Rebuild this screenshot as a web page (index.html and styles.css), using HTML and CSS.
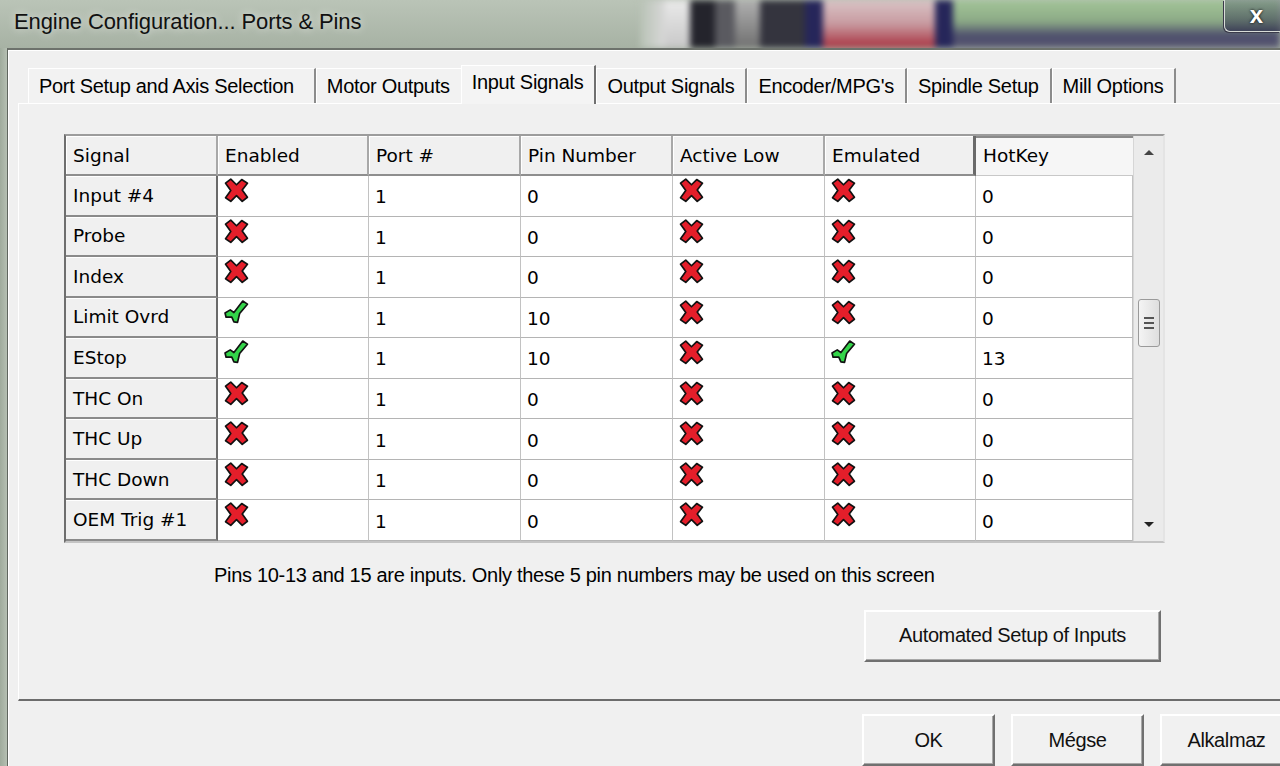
FILE: index.html
```html
<!DOCTYPE html>
<html lang="en">
<head>
    <meta charset="UTF-8">
    <title>Engine Configuration... Ports &amp; Pins</title>
    <link rel="stylesheet" href="styles.css">
</head>
<body>
    <svg class="defs" width="0" height="0">
        <symbol id="no" viewBox="0 0 24 24">
            <path d="M1.5 5 L6.5 1 L12 6.5 L17 1.5 L22.5 5 L17.5 11.5 L22.5 18.5 L17.5 22.5 L12 17 L6.5 22.5 L1.5 19 L6.5 12 Z" fill="#e41e2a" stroke="#111" stroke-width="1.6" stroke-linejoin="round"/>
        </symbol>
        <symbol id="yes" viewBox="0 0 24 24">
            <path d="M1 12.5 L6 9.5 L9.5 12 L18 1 L22.5 4 L15 13 L13 21.5 L9.5 21 L7.5 16.5 L2 16.5 Z" fill="#33d449" stroke="#111" stroke-width="1.6" stroke-linejoin="round"/>
        </symbol>
    </svg>

    <div class="titlebar">
        <div class="title">Engine Configuration... Ports &amp; Pins</div>
        <div class="backdrop">
            <div class="bd bd-fade"></div>
            <div class="bd bd-light"></div>
            <div class="bd bd-dark"></div>
            <div class="bd bd-mid"></div>
            <div class="bd bd-gray"></div>
            <div class="bd bd-dark2"></div>
            <div class="bd bd-navy"></div>
            <div class="bd bd-red"></div>
            <div class="bd bd-navy"></div>
            <div class="bd bd-green"></div>
        </div>
        <div class="close">x</div>
    </div>

    <div class="frame">
        <div class="frame-edge"></div>
        <div class="client">
            <div class="tabs">
                <div class="tab tab-first">Port Setup and Axis Selection</div>
                <div class="tab tab-before-active">Motor Outputs</div>
                <div class="tab active">Input Signals</div>
                <div class="tab">Output Signals</div>
                <div class="tab">Encoder/MPG's</div>
                <div class="tab">Spindle Setup</div>
                <div class="tab">Mill Options</div>
            </div>

            <div class="panel">
                <div class="grid-box">
                    <div class="grid">
                        <div class="head">Signal</div>
                        <div class="head">Enabled</div>
                        <div class="head">Port #</div>
                        <div class="head">Pin Number</div>
                        <div class="head">Active Low</div>
                        <div class="head raised">Emulated</div>
                        <div class="head sunken">HotKey</div>

                        <div class="rowhead">Input #4</div>
                        <div class="cell ic"><svg class="icon"><use href="#no"/></svg></div>
                        <div class="cell">1</div>
                        <div class="cell">0</div>
                        <div class="cell ic"><svg class="icon"><use href="#no"/></svg></div>
                        <div class="cell ic"><svg class="icon"><use href="#no"/></svg></div>
                        <div class="cell">0</div>

                        <div class="rowhead">Probe</div>
                        <div class="cell ic"><svg class="icon"><use href="#no"/></svg></div>
                        <div class="cell">1</div>
                        <div class="cell">0</div>
                        <div class="cell ic"><svg class="icon"><use href="#no"/></svg></div>
                        <div class="cell ic"><svg class="icon"><use href="#no"/></svg></div>
                        <div class="cell">0</div>

                        <div class="rowhead">Index</div>
                        <div class="cell ic"><svg class="icon"><use href="#no"/></svg></div>
                        <div class="cell">1</div>
                        <div class="cell">0</div>
                        <div class="cell ic"><svg class="icon"><use href="#no"/></svg></div>
                        <div class="cell ic"><svg class="icon"><use href="#no"/></svg></div>
                        <div class="cell">0</div>

                        <div class="rowhead">Limit Ovrd</div>
                        <div class="cell ic"><svg class="icon"><use href="#yes"/></svg></div>
                        <div class="cell">1</div>
                        <div class="cell">10</div>
                        <div class="cell ic"><svg class="icon"><use href="#no"/></svg></div>
                        <div class="cell ic"><svg class="icon"><use href="#no"/></svg></div>
                        <div class="cell">0</div>

                        <div class="rowhead">EStop</div>
                        <div class="cell ic"><svg class="icon"><use href="#yes"/></svg></div>
                        <div class="cell">1</div>
                        <div class="cell">10</div>
                        <div class="cell ic"><svg class="icon"><use href="#no"/></svg></div>
                        <div class="cell ic"><svg class="icon"><use href="#yes"/></svg></div>
                        <div class="cell">13</div>

                        <div class="rowhead">THC On</div>
                        <div class="cell ic"><svg class="icon"><use href="#no"/></svg></div>
                        <div class="cell">1</div>
                        <div class="cell">0</div>
                        <div class="cell ic"><svg class="icon"><use href="#no"/></svg></div>
                        <div class="cell ic"><svg class="icon"><use href="#no"/></svg></div>
                        <div class="cell">0</div>

                        <div class="rowhead">THC Up</div>
                        <div class="cell ic"><svg class="icon"><use href="#no"/></svg></div>
                        <div class="cell">1</div>
                        <div class="cell">0</div>
                        <div class="cell ic"><svg class="icon"><use href="#no"/></svg></div>
                        <div class="cell ic"><svg class="icon"><use href="#no"/></svg></div>
                        <div class="cell">0</div>

                        <div class="rowhead">THC Down</div>
                        <div class="cell ic"><svg class="icon"><use href="#no"/></svg></div>
                        <div class="cell">1</div>
                        <div class="cell">0</div>
                        <div class="cell ic"><svg class="icon"><use href="#no"/></svg></div>
                        <div class="cell ic"><svg class="icon"><use href="#no"/></svg></div>
                        <div class="cell">0</div>

                        <div class="rowhead">OEM Trig #1</div>
                        <div class="cell ic"><svg class="icon"><use href="#no"/></svg></div>
                        <div class="cell">1</div>
                        <div class="cell">0</div>
                        <div class="cell ic"><svg class="icon"><use href="#no"/></svg></div>
                        <div class="cell ic"><svg class="icon"><use href="#no"/></svg></div>
                        <div class="cell">0</div>
                    </div>

                    <div class="vscroll">
                        <div class="arrow">
                            <svg width="12" height="8" viewBox="0 0 12 8"><path d="M1 7 L6 2 L11 7 Z" fill="#444"/></svg>
                        </div>
                        <div class="track">
                            <div class="thumb">
                                <span></span><span></span><span></span>
                            </div>
                        </div>
                        <div class="arrow">
                            <svg width="12" height="8" viewBox="0 0 12 8"><path d="M1 1 L11 1 L6 6 Z" fill="#222"/></svg>
                        </div>
                    </div>
                </div>

                <div class="note">Pins 10-13 and 15 are inputs. Only these 5 pin numbers may be used on this screen</div>

                <div class="panel-actions">
                    <button class="btn btn-wide">Automated Setup of Inputs</button>
                </div>
            </div>

            <div class="dialog-actions">
                <button class="btn">OK</button>
                <button class="btn">Mégse</button>
                <button class="btn">Alkalmaz</button>
            </div>
        </div>
    </div>
</body>
</html>
```

FILE: styles.css
```css
body {
    margin: 0;
    width: 1280px;
    height: 766px;
    overflow: hidden;
    background-color: #f0f0f0;
    font-family: "Liberation Sans", Arial, sans-serif;
    color: #000;
}

.defs {
    position: absolute;
    width: 0;
    height: 0;
}

/* title bar */

.titlebar {
    position: relative;
    height: 48px;
    display: flex;
    overflow: hidden;
    background: linear-gradient(#bac4b7, #a7b2a4);
}

.title {
    padding: 9px 0 0 14px;
    font-size: 22px;
    letter-spacing: -0.1px;
    white-space: nowrap;
    color: #111;
    text-shadow: 0 0 8px rgba(255,255,255,0.7);
    z-index: 1;
}

.backdrop {
    margin-left: auto;
    width: 640px;
    flex-shrink: 0;
    display: flex;
    filter: blur(3px);
}

.bd {
    height: 100%;
}

.bd-fade { width: 25px; background: linear-gradient(to right, #b8c2b5, #d8d8d8); }
.bd-light { width: 25px; background: linear-gradient(#eaeaea, #c8c8c8); }
.bd-dark { width: 25px; background: #24242c; }
.bd-mid { width: 20px; background: #5a5a60; }
.bd-gray { width: 25px; background: linear-gradient(#b0b0b0, #707070); }
.bd-dark2 { width: 45px; background: #34343e; }
.bd-navy { width: 18px; background: #26265a; }
.bd-red { width: 112px; background: linear-gradient(#d9c4c6 0%, #c89aa0 50%, #a8303e 100%); }
.bd-green { flex: 1; background: linear-gradient(#a3c598 0%, #8caa86 45%, #4c4c6c 75%, #5a5a72 100%); }

.close {
    position: absolute;
    right: 0;
    top: 0;
    width: 56px;
    height: 32px;
    padding-left: 8px;
    border: 1px solid #d8dcd8;
    border-top: none;
    border-right: none;
    border-radius: 0 0 0 6px;
    box-shadow: -1px 1px 0 #3a3a4a;
    background: linear-gradient(rgba(80,90,110,0.35), rgba(40,40,70,0.6));
    color: #fff;
    font-size: 24px;
    font-weight: bold;
    line-height: 30px;
    text-align: center;
    text-shadow: 0 0 3px #000;
    box-sizing: border-box;
}

/* window body */

.frame {
    display: flex;
    height: 718px;
}

.frame-edge {
    width: 7px;
    flex-shrink: 0;
    background: linear-gradient(to right, #9fab9c, #b5bfb2);
}

.client {
    flex: 1;
    min-width: 0;
    overflow: hidden;
    border-left: 1px solid #5f665e;
    border-top: 2px solid #6d726c;
    box-shadow: inset 1px 1px 0 #ffffff;
    padding-left: 10px;
    display: flex;
    flex-direction: column;
}

/* tabs */

.tabs {
    display: flex;
    align-items: flex-end;
    margin-top: 14px;
    padding-left: 10px;
    height: 39px;
}

.tab {
    height: 35px;
    padding: 0 11px 0 10px;
    display: flex;
    align-items: center;
    font-size: 20px;
    letter-spacing: -0.3px;
    white-space: nowrap;
    border-top: 1px solid #ffffff;
    border-left: 1px solid #ffffff;
    border-right: 2px solid #8c8c8c;
    background-color: #f2f2f2;
    box-sizing: border-box;
}

.tab-first {
    padding-right: 20px;
}

.tab-before-active {
    border-right: none;
}

.tab.active {
    height: 39px;
    padding-bottom: 6px;
    background-color: #f4f4f4;
    border-right: 2px solid #707070;
    position: relative;
    z-index: 1;
    margin-bottom: -1px;
}

.panel {
    height: 598px;
    flex-shrink: 0;
    border-top: 1px solid #ffffff;
    border-left: 1px solid #ffffff;
    border-bottom: 2px solid #6c6c6c;
    box-sizing: border-box;
    padding: 30px 0 0 45px;
}

/* signal grid */

.grid-box {
    display: flex;
    width: 1101px;
    border-top: 2px solid #9c9c9c;
    border-left: 2px solid #6e6e6e;
    border-bottom: 2px solid #c4c4c4;
    border-right: 2px solid #e4e4e4;
    box-sizing: border-box;
}

.grid {
    display: grid;
    grid-template-columns: 152px 151px 152px 152px 152px 151px 157px;
    grid-template-rows: 40px repeat(9, 40.55px);
    font-family: "DejaVu Sans", Tahoma, sans-serif;
    font-size: 18.5px;
    background-color: #ffffff;
}

.head,
.rowhead,
.cell {
    display: flex;
    align-items: center;
    padding-left: 7px;
    box-sizing: border-box;
    white-space: nowrap;
}

.head {
    background-color: #f0f0f0;
    border-right: 2px solid #a8a8a8;
    border-bottom: 2px solid #8e8e8e;
    box-shadow: inset 1px 1px 0 #ffffff;
}

.head.raised {
    border-right: 3px solid #6a6a6a;
}

.head.sunken {
    background-color: #f6f6f6;
    border-right: none;
    border-bottom: 1px solid #c8c8c8;
    box-shadow: inset 0 2px 0 #8a8a8a;
}

.rowhead {
    background-color: #f0f0f0;
    border-right: 2px solid #6a6a6a;
    border-bottom: 2px solid #8a8a8a;
    box-shadow: inset 0 1px 0 #ffffff;
}

.cell {
    border-right: 1px solid #c2c2c2;
    border-bottom: 1px solid #b4b4b4;
    padding-left: 6px;
    padding-top: 2px;
}

.cell.ic {
    align-items: flex-start;
    padding-top: 2px;
}

.icon {
    width: 25px;
    height: 25px;
}

.vscroll {
    flex: 1;
    display: flex;
    flex-direction: column;
    background-color: #ebebeb;
    border-left: 1px solid #d6d6d6;
}

.arrow {
    height: 32px;
    display: flex;
    align-items: center;
    justify-content: center;
}

.track {
    flex: 1;
    padding: 131px 3px 0 4px;
}

.thumb {
    height: 48px;
    border: 1px solid #9a9a9a;
    border-radius: 3px;
    background: linear-gradient(to right, #f4f4f4, #dedede);
    display: flex;
    flex-direction: column;
    justify-content: center;
    align-items: center;
    gap: 3px;
    box-sizing: border-box;
}

.thumb span {
    width: 10px;
    height: 2px;
    background-color: #555;
}

.note {
    margin: 21px 0 0 150px;
    font-size: 20px;
    letter-spacing: -0.3px;
    white-space: nowrap;
}

.panel-actions {
    width: 1097px;
    display: flex;
    justify-content: flex-end;
    margin-top: 23px;
}

/* buttons */

.btn {
    height: 52px;
    width: 133px;
    flex-shrink: 0;
    padding: 0;
    font-family: "Liberation Sans", Arial, sans-serif;
    font-size: 20px;
    letter-spacing: -0.4px;
    color: #111;
    background-color: #f1f1f1;
    border-top: 2px solid #ffffff;
    border-left: 2px solid #ffffff;
    border-right: 2px solid #707070;
    border-bottom: 2px solid #707070;
    box-shadow: inset -1px -1px 0 #a8a8a8;
}

.btn-wide {
    width: 297px;
}

.dialog-actions {
    display: flex;
    gap: 16px;
    margin-top: 13px;
    padding-left: 844px;
}
```
